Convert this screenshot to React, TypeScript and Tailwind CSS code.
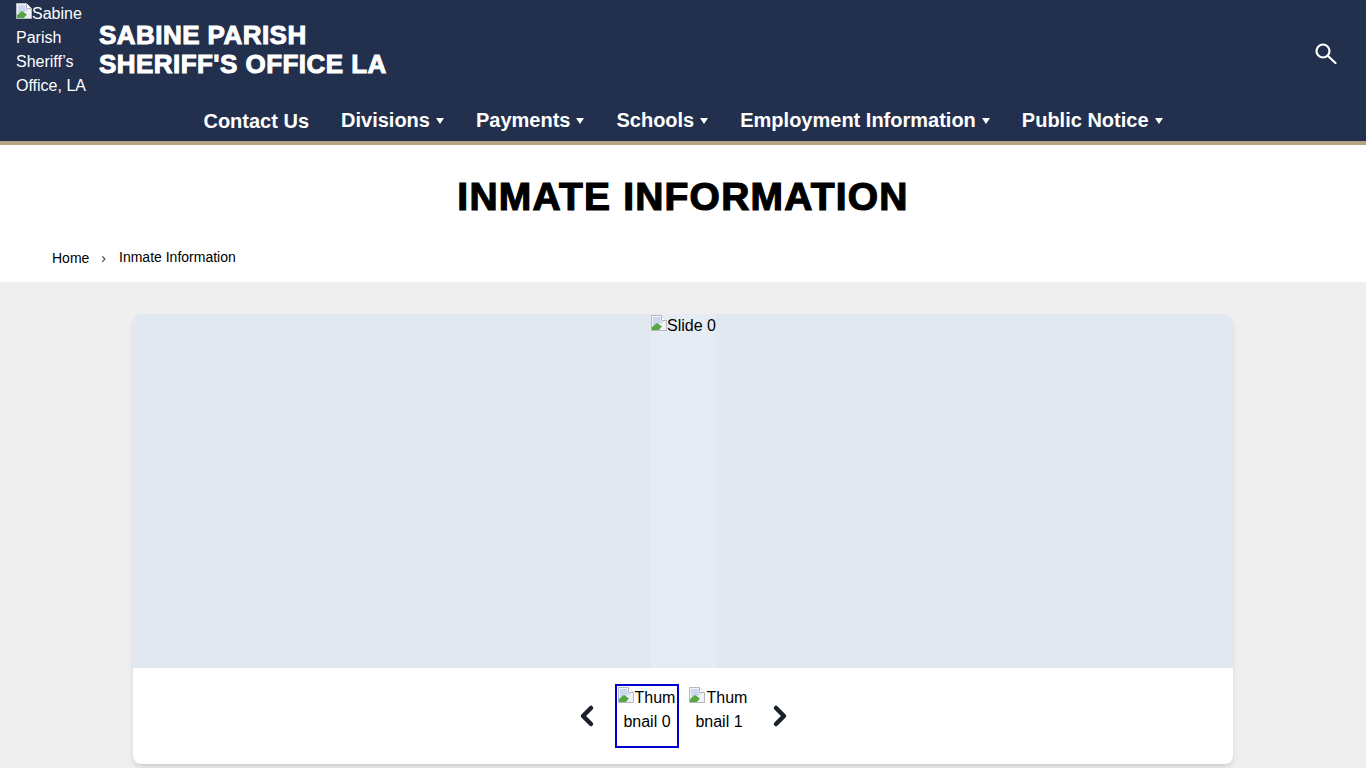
import React from "react";
import { ChevronLeft, ChevronRight } from "lucide-react";

function BrokenImage({ className = "" }: { className?: string }) {
  return (
    <svg width="16" height="16" viewBox="0 0 16 16" className={"inline-block align-baseline " + className}>
      <path d="M0.5 0.5H10.5L15.5 5.5V15.5H0.5Z" fill="#f2f4f8" stroke="#b4b8c2" />
      <path d="M10.5 0.5V5.5H15.5" fill="#fff" stroke="#b4b8c2" />
      <path d="M2 2H9.5V6.5H14L6 10H2Z" fill="#c9d7f0" />
      <path d="M1 15V12L6 8L11 11.5L8 15Z" fill="#57a543" />
      <path d="M8 15L13 10L15 11V15Z" fill="#eef2f8" />
    </svg>
  );
}

function Caret() {
  return <span className="ml-1.5 mt-0.5 inline-block border-x-[4px] border-t-[6px] border-x-transparent border-t-white" />;
}

const NAV = ["Divisions", "Payments", "Schools", "Employment Information", "Public Notice"];

export default function App() {
  return (
    <div className="min-h-screen overflow-hidden bg-[#efefef] font-['Liberation_Sans',Arial,sans-serif] text-black">
      <header className="h-[145px] border-b-4 border-[#b5a283] bg-[#22304e] text-white">
        <div className="flex h-[97px] items-center pl-4 pr-[29px]">
          <div className="w-[72px] shrink-0 pt-[3px] text-base leading-6">
            <BrokenImage />Sabine Parish Sheriff’s Office, LA
          </div>
          <div className="ml-[11px] pt-0.5 text-[26px] leading-[29px] font-bold tracking-[0.45px] [-webkit-text-stroke:1px_white]">
            SABINE PARISH
            <br />
            SHERIFF'S OFFICE LA
          </div>
          <svg width="22" height="22" viewBox="0 0 22 22" fill="none" stroke="white" strokeWidth="2.2" strokeLinecap="round" className="ml-auto mt-[10px]">
            <circle cx="8" cy="8" r="6.5" />
            <path d="M13 13L20.5 20" />
          </svg>
        </div>
        <nav className="flex h-11 items-start justify-center gap-8 text-xl leading-[46px] font-bold">
          <span className="pt-px">Contact Us</span>
          {NAV.map((n) => (
            <span key={n} className="flex items-center">
              {n}
              <Caret />
            </span>
          ))}
        </nav>
      </header>
      <section className="h-[137px] bg-white">
        <h1 className="pt-[30px] text-center text-[39px] leading-[44px] font-bold tracking-[1.2px] [-webkit-text-stroke:1.2px_black]">
          INMATE INFORMATION
        </h1>
        <div className="mt-[27px] flex items-center pl-[52px] text-sm">
          <span className="pt-0.5">Home</span>
          <span className="ml-3 mr-[13px] pt-0.5 text-[#333]">›</span>
          <span>Inmate Information</span>
        </div>
      </section>
      <main className="pt-8">
        <div className="mx-auto w-[1100px] overflow-hidden rounded-lg bg-white shadow-md">
          <div className="flex h-[354px] justify-center bg-[#e2e8f0]">
            <div className="ml-px h-full w-[65px] whitespace-nowrap bg-[#e5ecf4] leading-6">
              <BrokenImage />Slide 0
            </div>
          </div>
          <div className="flex h-24 items-center justify-center pl-px">
            <ChevronLeft size={32} strokeWidth={3.4} className="mr-[8px] text-[#1a202c]" />
            <div className="ml-[4px] h-16 w-16 border-2 border-[#0000cc] text-center leading-6 break-all">
              <BrokenImage className="-ml-px mr-px" />Thumbnail 0
            </div>
            <div className="ml-2 h-16 w-16 border-2 border-transparent text-center leading-6 break-all">
              <BrokenImage className="-ml-[2px] mr-[2px]" />Thumbnail 1
            </div>
            <ChevronRight size={32} strokeWidth={3.4} className="ml-[13px] text-[#1a202c]" />
          </div>
        </div>
      </main>
    </div>
  );
}
